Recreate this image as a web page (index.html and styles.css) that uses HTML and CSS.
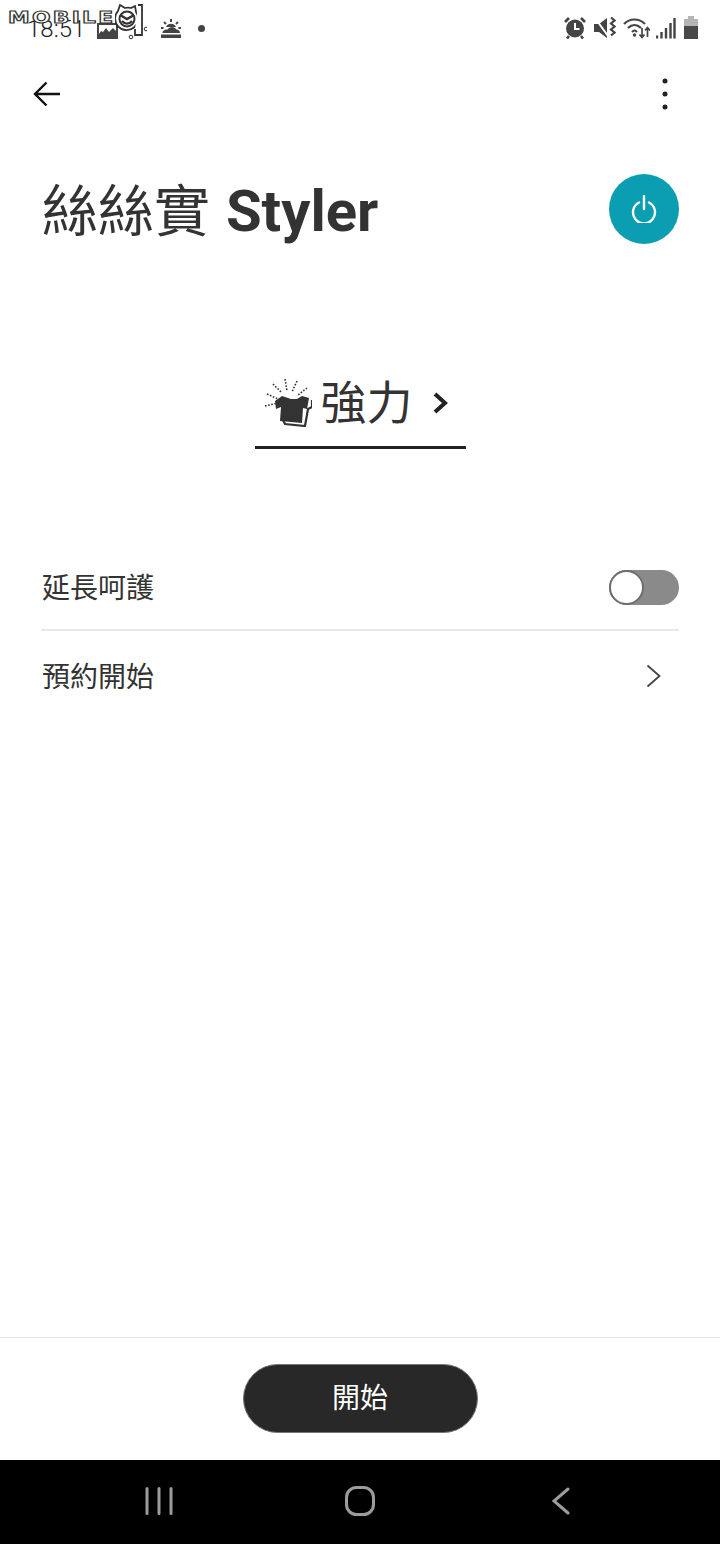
FILE: index.html
```html
<!DOCTYPE html>
<html lang="zh-Hant">
<head>
<meta charset="utf-8">
<title>絲絲實 Styler</title>
<link rel="stylesheet" href="styles.css">
</head>
<body>
<div class="page">
  <header class="status">
    <div class="status-left">
      <span class="time">18:51</span>
      <svg class="ic-photo" viewBox="0 0 21 17"><path d="M0 1h21v16H0z" fill="#444"/><path d="M2 3h17v6l-3-3-4 4-3-4-3 4-2-1-2 3z" fill="#fff"/></svg>
      <svg class="ic-sun" viewBox="0 0 22 20"><path d="M1 15.500h20v3.500H1zM2.500 14c0-2.500 2.500-4 5-3.500 2-3.500 7-3.500 9 0 2 0 3.500 1.500 3.500 3.500z" fill="#444"/><path d="M6 8a5.500 5.500 0 0 1 10 0z" fill="#444"/><path d="M11 0v3M4 3l2 2M18 3l-2 2M1 9h2.500M18.500 9h2.500" stroke="#444" stroke-width="2"/></svg>
      <span class="dot"></span>
    </div>
    <div class="status-right">
      <svg class="ic-alarm" viewBox="0 0 22 23"><circle cx="11" cy="12.500" r="9" fill="#444"/><path d="M11 7v6h4.500" fill="none" stroke="#fff" stroke-width="2"/><path d="M1 6l4-4M21 6l-4-4M5 20l-2 2.500M17 20l2 2.500" stroke="#444" stroke-width="2.600"/></svg>
      <svg class="ic-mute" viewBox="0 0 22 23"><path d="M0 8h5l8-6v20l-8-6H0z" fill="#444"/><path d="M1 2l13 18" stroke="#fff" stroke-width="2"/><path d="M17 1.500l3.500 3-3.500 3 3.500 3-3.500 3 3.500 3-3.500 3" fill="none" stroke="#444" stroke-width="2.200"/></svg>
      <svg class="ic-wifi" viewBox="0 0 27 22"><path d="M1 7c6-6 15-6 21 0M5 11c4-4 9-4 13 0M9 15c2-2 3-2 5 0" fill="none" stroke="#444" stroke-width="2.200"/><circle cx="11.500" cy="18" r="1.700" fill="#444"/><path d="M19 11v9M16.500 17.500l2.500 3 2.500-3M24.500 20v-9M22 13.500l2.500-3 2.500 3" fill="none" stroke="#444" stroke-width="1.700"/></svg>
      <svg class="ic-signal" viewBox="0 0 20 22"><path d="M1 18.500v3M5.500 15v6.500M10 11v10.500M14.500 6v15.500M18.500 1v20.500" stroke="#444" stroke-width="2.400"/></svg>
      <svg class="ic-batt" viewBox="0 0 14 23"><path d="M4 0h6v3H4z" fill="#b5b5b5"/><path d="M0 3h14v7H0z" fill="#b5b5b5"/><path d="M0 10h14v13H0z" fill="#484848"/></svg>
    </div>
    <div class="watermark">
      <span class="wm-text">MOBILE</span>
      <svg class="wm-face" viewBox="0 0 32 36"><path d="M5 1l5 3c2-.5 4-.5 6 0l4-2 1 6a11.500 11.500 0 1 1-18-1z" fill="#fff" stroke="#333" stroke-width="1.800"/><circle cx="12" cy="15" r="7.500" fill="#fff" stroke="#333" stroke-width="2"/><path d="M5 11l7 4 7-4M7 17c3 3.500 7 3.500 10 0" fill="none" stroke="#333" stroke-width="2.400"/><path d="M23 1h4v30h-7v-6" fill="#fff" stroke="#333" stroke-width="1.800"/><circle cx="16" cy="33" r="1.800" fill="#fff" stroke="#333"/><circle cx="31" cy="25" r="1.800" fill="#fff" stroke="#333"/></svg>
    </div>
  </header>

  <nav class="toolbar">
    <svg class="ic-back" viewBox="0 0 28 26"><path d="M27 13H2M13.500 1.500L2 13l11.500 11.500" fill="none" stroke="#111" stroke-width="2.400"/></svg>
    <div class="menu"><span></span><span></span><span></span></div>
  </nav>

  <section class="title-row">
    <h1 class="title">絲絲實 <b>Styler</b></h1>
    <button class="power" aria-label="power">
      <svg viewBox="0 0 26 28"><path d="M8 7.500a11 11 0 1 0 10 0M13 1v13" fill="none" stroke="#fff" stroke-width="2.400" stroke-linecap="round"/></svg>
    </button>
  </section>

  <section class="mode-wrap">
    <div class="mode">
      <svg class="ic-shirt" viewBox="0 0 48 48"><path d="M19 41l2 4 20 2 3-17 4-2v-7" fill="none" stroke="#333" stroke-width="2.200"/><path d="M18 17l9 3h6l5-3 7 2-2 11-4-1-1 15-22-2 1-14-5 2-1-8z" fill="#333"/><path d="M1 27l13-3M3 15l11 5M9 5l9 9M21 0l2 12M33 2l-5 11M43 9l-10 8" fill="none" stroke="#333" stroke-width="1.600" stroke-dasharray="1.600 1.600"/></svg>
      <span class="mode-label">強力</span>
      <svg class="ic-mode-chev" viewBox="0 0 15 22"><path d="M2 2l10 9-10 9" fill="none" stroke="#222" stroke-width="4"/></svg>
    </div>
  </section>

  <section class="list">
    <div class="row row-line">
      <span class="row-text">延長呵護</span>
      <div class="toggle"><span class="knob"></span></div>
    </div>
    <div class="row">
      <span class="row-text">預約開始</span>
      <svg class="ic-chev" viewBox="0 0 15 24"><path d="M1.500 1.500L13.500 12 1.500 22.500" fill="none" stroke="#444" stroke-width="1.800"/></svg>
    </div>
  </section>

  <footer class="footer">
    <button class="start">開始</button>
  </footer>

  <div class="navbar">
    <svg class="nav-bars" viewBox="0 0 28 28"><path d="M2 1.500v25M14 1.500v25M26 1.500v25" stroke="#9c9c9c" stroke-width="3" stroke-linecap="round"/></svg>
    <svg class="nav-home" viewBox="0 0 30 30"><rect x="1.500" y="1.500" width="27" height="27" rx="10" fill="none" stroke="#9c9c9c" stroke-width="3"/></svg>
    <svg class="nav-back" viewBox="0 0 18 28"><path d="M16 2L2 14l14 12" fill="none" stroke="#9c9c9c" stroke-width="3" stroke-linecap="round"/></svg>
  </div>
</div>
</body>
</html>
```

FILE: styles.css
```css
* { box-sizing: border-box; }
html, body { margin: 0; padding: 0; background: #fff; }
body { font-family: Roboto, "Noto Sans CJK TC", "Noto Sans", sans-serif; color: #333; }
.page { width: 720px; height: 1544px; display: flex; flex-direction: column; overflow: hidden; }
svg { display: block; flex: none; }

.status { position: relative; height: 46px; flex: none; display: flex; justify-content: space-between; align-items: flex-start; padding: 16px 22px 0 27px; }
.status-left { display: flex; align-items: center; height: 23px; }
.status-right { display: flex; align-items: center; height: 23px; }
.time { font-size: 24px; font-weight: 300; color: #222; line-height: 28px; width: 70px; margin-top: 3px; }
.ic-photo { width: 21px; height: 17px; margin-top: 5px; }
.ic-sun { width: 22px; height: 20px; margin-left: 42px; margin-top: 3px; }
.dot { width: 7px; height: 7px; border-radius: 50%; background: #444; margin-left: 16px; margin-top: 1px; }
.ic-alarm { width: 22px; height: 23px; }
.ic-mute { width: 22px; height: 23px; margin-left: 8px; }
.ic-wifi { width: 27px; height: 22px; margin-left: 7px; }
.ic-signal { width: 20px; height: 22px; margin-left: 6px; }
.ic-batt { width: 14px; height: 23px; margin-left: 8px; }

.watermark { position: absolute; left: 8px; top: 4px; display: flex; align-items: flex-start; }
.wm-text { font-family: "DejaVu Sans", sans-serif; font-size: 15px; line-height: 15px; font-weight: 700; letter-spacing: 1.600px; color: #fff; -webkit-text-stroke: 1px #333; margin-top: 7px; width: 107px; transform-origin: left center; transform: scaleX(1.450); }
.wm-face { width: 32px; height: 36px; margin-left: 0; }

.toolbar { height: 93px; flex: none; display: flex; justify-content: space-between; align-items: center; padding: 2px 53px 0 33px; }
.ic-back { width: 28px; height: 26px; }
.menu { display: flex; flex-direction: column; gap: 9px; }
.menu span { width: 4px; height: 4px; border-radius: 50%; background: #222; box-shadow: 0 0 0 .5px #222; }

.title-row { height: 140px; flex: none; display: flex; justify-content: space-between; align-items: center; padding: 0 41px 0 42px; }
.title { margin: 4px 0 0; font-size: 56px; line-height: 70px; font-weight: 400; color: #333; white-space: nowrap; word-spacing: 2px; }
.title b { font-weight: 700; font-size: 58px; }
.power { width: 70px; height: 70px; border: 0; padding: 0; border-radius: 50%; background: #0b9eb3; display: flex; align-items: center; justify-content: center; }
.power svg { width: 26px; height: 28px; }

.mode-wrap { height: 171px; flex: none; display: flex; justify-content: center; padding-top: 90px; }
.mode { width: 211px; height: 80px; border-bottom: 3px solid #222; display: flex; align-items: center; padding: 0 0 9px 9px; }
.ic-shirt { width: 48px; height: 48px; }
.mode-label { font-size: 46px; line-height: 60px; margin-left: 9px; color: #333; }
.ic-mode-chev { width: 15px; height: 22px; margin-left: 20px; }

.list { padding: 94px 41px 0; flex: 1; }
.row { height: 90px; display: flex; justify-content: space-between; align-items: center; font-size: 28px; color: #333; padding-left: 1px; }
.row-text { margin-bottom: 2px; }
.row-line { height: 87px; border-bottom: 2px solid #e8e8e8; }
.toggle { width: 70px; height: 35px; margin-top: 2px; border-radius: 18px; background: #8a8a8a; display: flex; }
.knob { width: 35px; height: 35px; border-radius: 50%; background: #fff; border: 2px solid #6e6e6e; }
.ic-chev { width: 15px; height: 24px; margin-right: 18px; }

.footer { height: 123px; flex: none; border-top: 1px solid #e2e2e2; display: flex; justify-content: center; padding-top: 26px; }
.start { width: 235px; height: 69px; border-radius: 35px; border: 1px solid #777; background: #282828; color: #fff; font-family: inherit; font-size: 28px; padding: 0 0 5px; }

.navbar { height: 84px; flex: none; background: #000; display: flex; align-items: center; padding: 0 150px 2px 145px; justify-content: space-between; }
.nav-bars { width: 28px; height: 28px; }
.nav-home { width: 30px; height: 30px; margin-right: 6px; }
.nav-back { width: 18px; height: 28px; }
```
